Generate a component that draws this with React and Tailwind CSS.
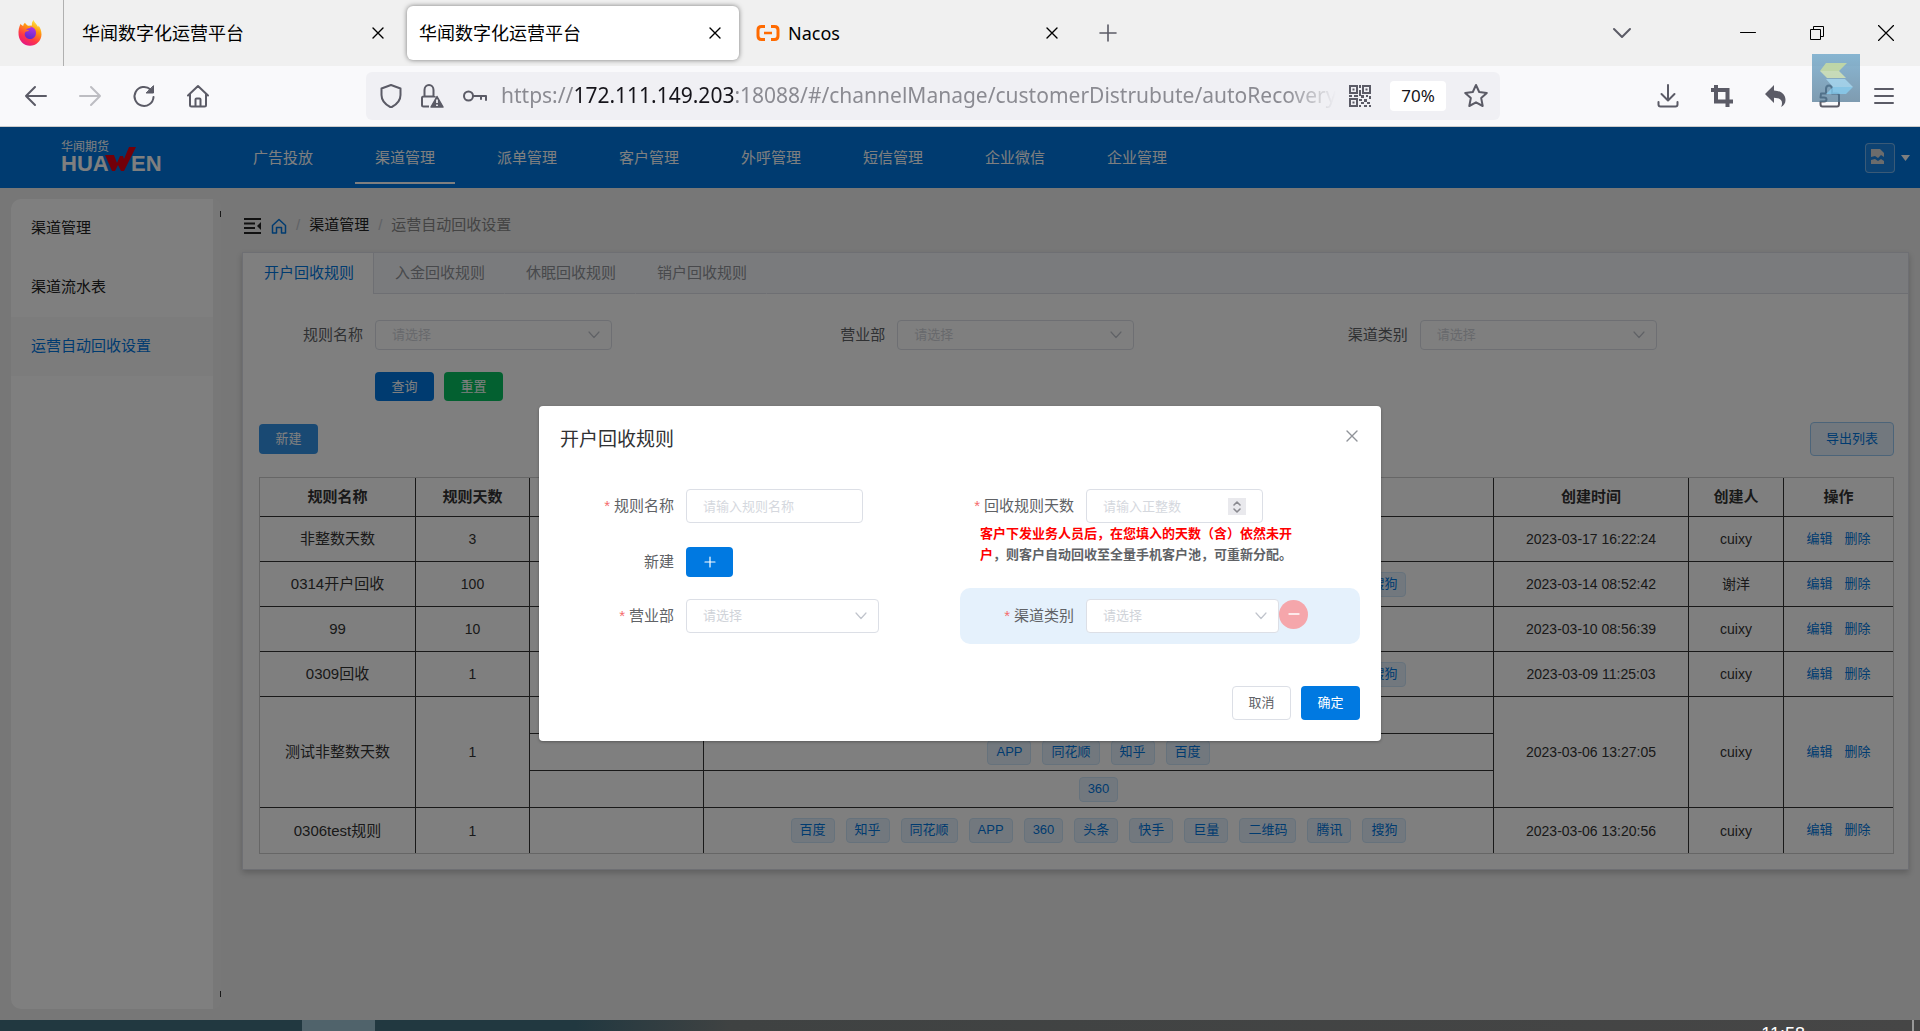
import { useState } from 'react'

const navItems = ['广告投放', '渠道管理', '派单管理', '客户管理', '外呼管理', '短信管理', '企业微信', '企业管理']
const sideItems = ['渠道管理', '渠道流水表', '运营自动回收设置']
const ruleTabs = ['开户回收规则', '入金回收规则', '休眠回收规则', '销户回收规则']
const allChannels = ['百度', '知乎', '同花顺', 'APP', '360', '头条', '快手', '巨量', '二维码', '腾讯', '搜狗']

const rules = [
  { name: '非整数天数', days: 3, groups: [[]], createdAt: '2023-03-17 16:22:24', creator: 'cuixy' },
  { name: '0314开户回收', days: 100, groups: [allChannels], createdAt: '2023-03-14 08:52:42', creator: '谢洋' },
  { name: '99', days: 10, groups: [[]], createdAt: '2023-03-10 08:56:39', creator: 'cuixy' },
  { name: '0309回收', days: 1, groups: [allChannels], createdAt: '2023-03-09 11:25:03', creator: 'cuixy' },
  {
    name: '测试非整数天数',
    days: 1,
    groups: [[], ['APP', '同花顺', '知乎', '百度'], ['360']],
    createdAt: '2023-03-06 13:27:05',
    creator: 'cuixy'
  },
  { name: '0306test规则', days: 1, groups: [allChannels], createdAt: '2023-03-06 13:20:56', creator: 'cuixy' }
]

function Icon({ children, className = 'w-6 h-6', viewBox = '0 0 24 24', strokeWidth = 2 }) {
  return (
    <svg
      className={className}
      viewBox={viewBox}
      fill="none"
      stroke="currentColor"
      strokeWidth={strokeWidth}
      strokeLinecap="round"
      strokeLinejoin="round"
      aria-hidden="true"
    >
      {children}
    </svg>
  )
}

function FirefoxLogo() {
  return (
    <svg className="w-6 h-7" viewBox="0 0 24 28" aria-hidden="true">
      <defs>
        <linearGradient id="fxBody" x1="0.8" y1="0" x2="0.3" y2="1">
          <stop offset="0" stopColor="#fff44f" />
          <stop offset="0.35" stopColor="#ff980e" />
          <stop offset="0.7" stopColor="#ff3647" />
          <stop offset="1" stopColor="#e31587" />
        </linearGradient>
        <linearGradient id="fxGlobe" x1="0.6" y1="0" x2="0.3" y2="1">
          <stop offset="0" stopColor="#b833e1" />
          <stop offset="1" stopColor="#592acb" />
        </linearGradient>
      </defs>
      <path
        d="M15.5 1c-1.500 2-2 3.500-1.500 5.500l-4 .2C8.500 5.800 7.600 5 7 3.800 5.800 4.800 5.300 6 5.200 7 4 6.700 3 5.800 2.600 4.800 1 8 .2 11.500.6 16 1.200 22 6 26.800 12 26.800S23.400 22 23.500 15.500c0-4-1.300-7-3-9l-.3 1.700C19 5 16.500 4 15.500 1z"
        fill="url(#fxBody)"
      />
      <path
        d="M8 10.500c1.500-1 2.500-1.500 5-1.500-1-1-1.500-1-2.200-1.200 3.700-.6 7.400 1.800 7.200 6.200-.2 4-3 6-6 6s-5.300-2.200-5.300-5c0-1.200.5-2 1.500-2.500l2.800-.5c0-1-1.500-1-3-1.500z"
        fill="url(#fxGlobe)"
      />
    </svg>
  )
}

function NacosLogo() {
  return (
    <svg className="w-6 h-5" viewBox="0 0 24 20" fill="none" stroke="#ff6a00" aria-hidden="true">
      <path d="M9 3.500H5.500Q2 3.500 2 7v6q0 3.500 3.500 3.500H9M15 3.500h3.500Q22 3.500 22 7v6q0 3.500-3.500 3.500H15" strokeWidth="3" />
      <path d="M8 10h8" strokeWidth="2.500" />
    </svg>
  )
}

function CloseIcon() {
  return (
    <Icon className="w-3 h-3" viewBox="0 0 12 12" strokeWidth={1.4}>
      <path d="M1 1l10 10M11 1L1 11" />
    </Icon>
  )
}

function BrowserTab({ title, active, icon }) {
  return (
    <div
      className={`flex items-center w-[332px] h-[54px] pl-3 pr-2 rounded-md text-lg text-black ${
        active ? 'bg-white shadow-[0_0_5px_rgba(0,0,0,0.5)]' : ''
      }`}
    >
      {icon && <span className="mr-2">{icon}</span>}
      <span className="flex-1">{title}</span>
      <button aria-label="关闭标签页" className="flex items-center justify-center w-8 h-8">
        <CloseIcon />
      </button>
    </div>
  )
}

function TabStrip() {
  return (
    <div className="flex items-center h-[66px] bg-[#f0f0f0] font-['Noto_Sans','Noto_Sans_CJK_SC',sans-serif]">
      <div className="flex items-center justify-center w-16 h-full pr-1 border-r border-[#b0b0b0]">
        <FirefoxLogo />
      </div>
      <div className="flex flex-1 items-center gap-[5px] pl-[6px]">
        <BrowserTab title="华闻数字化运营平台" />
        <BrowserTab title="华闻数字化运营平台" active />
        <BrowserTab title="Nacos" icon={<NacosLogo />} />
        <button aria-label="新标签页" className="flex justify-center w-[54px] text-[#5b5b66]">
          <Icon className="w-[18px] h-[18px]" viewBox="0 0 18 18" strokeWidth={1.6}>
            <path d="M9 1v16M1 9h16" />
          </Icon>
        </button>
      </div>
      <button aria-label="列出标签页" className="flex justify-center w-[54px] mr-16 text-[#5b5b66]">
        <Icon className="w-5 h-3" viewBox="0 0 20 12">
          <path d="M2 2l8 8 8-8" />
        </Icon>
      </button>
      <button aria-label="最小化" className="flex justify-center w-[69px]">
        <Icon className="w-4 h-4" viewBox="0 0 16 16" strokeWidth={1}>
          <path d="M.5 7.500h15" />
        </Icon>
      </button>
      <button aria-label="还原" className="flex justify-center w-[69px]">
        <svg className="w-4 h-4" viewBox="0 0 16 16" fill="none" stroke="#000" aria-hidden="true">
          <path d="M1.500 4.500h10v10h-10zM4.500 4.500v-3h10v10h-3" />
        </svg>
      </button>
      <button aria-label="关闭" className="flex justify-center w-[69px]">
        <Icon className="w-4 h-4" viewBox="0 0 16 16" strokeWidth={1.2}>
          <path d="M.5.5l15 15M15.500.5l-15 15" />
        </Icon>
      </button>
    </div>
  )
}

function ToolButton({ label, children, className = 'text-[#5b5b66]' }) {
  return (
    <button aria-label={label} className={`flex items-center justify-center w-[54px] h-12 ${className}`}>
      {children}
    </button>
  )
}

function AddressBar() {
  return (
    <div className="flex flex-1 items-center h-12 pl-[5px] mx-[141px] rounded-md bg-[#f0f0f4] text-[#5b5b66]">
      <button aria-label="跟踪保护" className="flex justify-center w-10">
        <Icon>
          <path d="M12 1l9.500 3.500V11c0 5-3.500 9.500-9.500 12.500C6 20.500 2.500 16 2.500 11V4.500z" />
        </Icon>
      </button>
      <button aria-label="连接不安全" className="flex justify-center w-[42px]">
        <svg className="w-6 h-6" viewBox="0 0 24 24" fill="none" stroke="currentColor" strokeWidth="2" aria-hidden="true">
          <path d="M9 22.500H3.500q-1.500 0-1.500-1.500v-7q0-1.500 1.500-1.500h10q1.500 0 1.500 1M4.500 12V6a4.500 5 0 0 1 9 0v6" />
          <path d="M17 12.500L23 23H11z" fill="currentColor" strokeWidth="1.500" strokeLinejoin="round" />
          <path d="M17 15.500v3.500M17 20.500v1.500" stroke="#f0f0f4" strokeWidth="1.800" />
        </svg>
      </button>
      <button aria-label="已保存的登录信息" className="flex justify-center w-[44px]">
        <Icon>
          <circle cx="5.500" cy="12" r="4.500" />
          <path d="M10 12h13v4M18 12v3" />
        </Icon>
      </button>
      <div className="flex-1 w-0 ml-1 overflow-hidden whitespace-nowrap text-[21px] text-[#8b8b92] font-['Noto_Sans',sans-serif] [mask-image:linear-gradient(to_right,black_94%,transparent)]">
        https://<span className="text-[#15141a]">172.111.149.203</span>
        :18088/#/channelManage/customerDistrubute/autoRecovery
      </div>
      <button aria-label="二维码" className="flex justify-center w-12">
        <svg className="w-[22px] h-[22px]" viewBox="0 0 22 22" fill="currentColor" aria-hidden="true">
          <path
            fillRule="evenodd"
            d="M0 0h9v9H0zM2 2v5h5V2zM13 0h9v9h-9zM15 2v5h5V2zM0 13h9v9H0zM2 15v5h5v-5z"
          />
          <path d="M3.500 3.500h2v2h-2zM16.500 3.500h2v2h-2zM3.500 16.500h2v2h-2zM10 0h2v3h-2zM10 5h2v6h-2zM0 10h3v2H0zM5 10h4v2H5zM12 10h3v3h-3zM17 10h2v2h-2zM20 11h2v3h-2zM10 14h3v2h-3zM15 14h3v3h-3zM12 17h3v2h-3zM18 17h3v2h-3zM10 20h2v2h-2zM15 20h3v2h-3zM20 20h2v2h-2z" />
        </svg>
      </button>
      <button className="w-14 h-[30px] mx-[6px] rounded bg-white text-[17px] text-[#15141a] font-['Noto_Sans',sans-serif]">
        70%
      </button>
      <button aria-label="添加书签" className="flex justify-center w-12">
        <Icon viewBox="0 0 26 26" className="w-[26px] h-[26px]">
          <path d="M13 2l3.200 7 7.600.9-5.600 5.200 1.500 7.900-6.700-3.700L6.300 23l1.500-7.900-5.600-5.200 7.600-.9z" />
        </Icon>
      </button>
    </div>
  )
}

function ToolBar() {
  return (
    <div className="flex items-center h-[61px] px-[9px] border-b border-[#ccc] bg-[#f9f9fb]">
      <ToolButton label="后退">
        <Icon>
          <path d="M22 12H2M11 3l-9 9 9 9" />
        </Icon>
      </ToolButton>
      <ToolButton label="前进" className="text-[#bdbdc2]">
        <Icon>
          <path d="M2 12h20M13 3l9 9-9 9" />
        </Icon>
      </ToolButton>
      <ToolButton label="刷新">
        <Icon>
          <path d="M21.500 13a9.500 9.500 0 1 1-3-7.500" />
          <path d="M21.500 2v7h-7z" fill="currentColor" strokeWidth="1" />
        </Icon>
      </ToolButton>
      <ToolButton label="主页">
        <Icon>
          <path d="M2 11.500L12 2l10 9.500M4 10v11q0 1.500 1.500 1.500h13q1.500 0 1.500-1.500V10M9.500 22v-6.500q0-1 1-1h3q1 0 1 1V22" />
        </Icon>
      </ToolButton>
      <AddressBar />
      <ToolButton label="下载">
        <Icon>
          <path d="M12 1v15M5.500 10l6.500 6.500 6.500-6.500M2.500 18v2.500q0 2 2 2h15q2 0 2-2V18" />
        </Icon>
      </ToolButton>
      <ToolButton label="截图">
        <svg className="w-6 h-6" viewBox="0 0 24 24" fill="none" stroke="currentColor" strokeWidth="4" aria-hidden="true">
          <path d="M6 1v16.500h17M1 6h16.500v17" />
        </svg>
      </ToolButton>
      <ToolButton label="撤销">
        <svg className="w-6 h-6" viewBox="0 0 24 24" fill="currentColor" aria-hidden="true">
          <path d="M10 1v5.500c7 .2 11.500 4 11.500 9.500 0 3-1.500 5.500-4.500 7 .8-1.500 1-2.500 1-4 0-3.500-3-5-8-5.200V19L1 10z" />
        </svg>
      </ToolButton>
      <ToolButton label="扩展">
        <Icon>
          <path d="M3 9.500h5V5q0-3.500 3-3.500t3 3.500v4.500h5q2 0 2 2V20q0 2.500-2 2.500H4.500Q2.500 22.500 2.500 20v-2.500H6q2.500 0 2.500-2t-2.500-2H2.500z" />
        </Icon>
      </ToolButton>
      <ToolButton label="菜单">
        <Icon className="w-5 h-5" viewBox="0 0 20 20">
          <path d="M1 3h18M1 10h18M1 17h18" />
        </Icon>
      </ToolButton>
    </div>
  )
}

// translucent screenshot helper that floats over the browser toolbar
function FloatingWidget() {
  return (
    <div className="absolute top-[54px] right-[60px] w-12 h-12 bg-linear-to-b from-[#5a9cc4]/70 to-[#4a7390]/70 pointer-events-none">
      <svg viewBox="0 0 48 48" className="w-12 h-12 opacity-70" aria-hidden="true">
        <path d="M14 9h21l-8 8H8z" fill="#d6e69a" />
        <path d="M8 17h19l7 7H15z" fill="#e4efb4" />
        <path d="M14 25h19l8 8H21z" fill="#aee0f8" />
        <path d="M21 33h20l-7 7H14z" fill="#8ad4f8" />
      </svg>
    </div>
  )
}

function AppHeader() {
  return (
    <header className="flex items-center h-[61px] pl-[61px] pr-[10px] bg-[#0077e1] text-white">
      <svg className="w-[102px] h-8 mr-[70px] overflow-visible" viewBox="0 0 102 32" aria-label="华闻期货 HUAWEN">
        <text x="0" y="9" fontSize="12" fill="#fff">华闻期货</text>
        <text x="0" y="29" fontSize="22" fontWeight="700" fill="#fff">HUA</text>
        <text x="70" y="29" fontSize="22" fontWeight="700" fill="#fff">EN</text>
        <path d="M44 13h9l3 8 3-7h3l1 3L68 5h7L63 29h-3l-3-6-3 6h-3z" fill="#e60012" />
      </svg>
      <nav className="flex flex-1 gap-[22px] h-full">
        {navItems.map((item, index) => (
          <a
            key={item}
            href="#"
            className={`flex items-center h-[57px] px-5 pt-2 text-[15px] border-b-2 ${
              index === 1 ? 'border-white' : 'border-transparent'
            }`}
          >
            {item}
          </a>
        ))}
      </nav>
      <button aria-label="用户菜单" className="flex items-center gap-[6px]">
        <span className="flex items-center justify-center w-[30px] h-[30px] pr-1 pb-1 rounded border border-white/40 bg-white/10">
          <svg className="w-[14px] h-4" viewBox="0 0 14 16" aria-hidden="true">
            <path d="M0 1h9l4 4v4l-3-2-3 3-3-2-4 1zM0 12l4-1 3 2 3-2 3 2v3H0z" fill="#d8d8d8" />
          </svg>
        </span>
        <svg className="w-[9px] h-[6px]" viewBox="0 0 9 6" aria-hidden="true">
          <path d="M0 0h9L4.500 6z" fill="#fff" />
        </svg>
      </button>
    </header>
  )
}

function Sidebar() {
  return (
    <aside className="flex w-[210px]">
      <div className="flex-1 rounded-l-[10px] bg-white overflow-hidden">
        {sideItems.map((item, index) => (
          <a
            key={item}
            href="#"
            className={`flex items-center h-[59px] px-5 text-[15px] ${
              index === 2 ? 'bg-[#f8f8f8] text-[#0077e1]' : 'text-[#222]'
            }`}
          >
            {item}
          </a>
        ))}
      </div>
      <div className="flex flex-col items-end justify-between w-2 py-3 rounded-r-[10px] bg-[#f1f1f1]">
        <span className="w-px h-[6px] bg-[#333]" />
        <span className="w-px h-[6px] bg-[#333]" />
      </div>
    </aside>
  )
}

function Breadcrumb() {
  return (
    <div className="flex items-center h-[53px] px-[2px] text-[15px]">
      <button aria-label="收起菜单" className="text-[#222]">
        <svg className="w-[18px] h-4" viewBox="0 0 18 16" aria-hidden="true">
          <path d="M0 0h17v2H0zM0 4.500h11v2H0zM0 9h11v2H0zM0 14h17v2H0zM17 4v8l-4-4z" fill="currentColor" />
        </svg>
      </button>
      <a href="#" aria-label="首页" className="ml-[9px] text-[#0077e1]">
        <Icon className="w-4 h-4" viewBox="0 0 16 16" strokeWidth={1.5}>
          <path d="M1.500 15V7.500L8 1.500l6.500 6V15h-4V9.500h-5V15z" />
        </Icon>
      </a>
      <span className="mx-[9px] text-[#c0c4cc]">/</span>
      <a href="#" className="text-[#222]">渠道管理</a>
      <span className="mx-[9px] text-[#c0c4cc]">/</span>
      <span className="text-[#888]">运营自动回收设置</span>
    </div>
  )
}

function Select({ id, className }) {
  return (
    <div className={`relative ${className}`}>
      <select
        id={id}
        className="w-full h-full pl-4 rounded border border-[#dcdfe6] bg-white text-[13px] text-[#d0d3d9] appearance-none"
      >
        <option>请选择</option>
      </select>
      <span className="absolute inset-y-0 right-3 flex items-center text-[#c0c4cc] pointer-events-none">
        <Icon className="w-3 h-2" viewBox="0 0 12 8" strokeWidth={1.2}>
          <path d="M1 1l5 5.500L11 1" />
        </Icon>
      </span>
    </div>
  )
}

function FilterField({ id, label }) {
  return (
    <div className="flex items-center">
      <label htmlFor={id} className="w-[116px] pr-3 text-right text-[15px] text-[#606266]">
        {label}
      </label>
      <Select id={id} className="w-[237px] h-[30px]" />
    </div>
  )
}

function Tag({ children }) {
  return (
    <span className="h-[25px] px-2 rounded border border-[#cce4f9] bg-[#e5f1fc] text-[13px] leading-[22px] text-[#0077e1]">
      {children}
    </span>
  )
}

function RuleRows({ rule, isLast }) {
  const span = rule.groups.length
  const line = isLast ? 'border-[#333]' : 'border-b border-[#333]'
  const rowHeight = span > 1 ? 'h-[37px]' : 'h-[45px]'
  return rule.groups.map((tags, index) => (
    <tr key={index} className={rowHeight}>
      {index === 0 && (
        <>
          <td rowSpan={span} className={`border-r text-[15px] ${line}`}>{rule.name}</td>
          <td rowSpan={span} className={`border-r ${line}`}>{rule.days}</td>
        </>
      )}
      <td className={`border-r ${line}`} />
      <td className={`border-r ${line}`}>
        <div className="flex justify-center gap-[11px]">
          {tags.map(tag => (
            <Tag key={tag}>{tag}</Tag>
          ))}
        </div>
      </td>
      {index === 0 && (
        <>
          <td rowSpan={span} className={`border-r ${line}`}>{rule.createdAt}</td>
          <td rowSpan={span} className={`border-r ${line}`}>{rule.creator}</td>
          <td rowSpan={span} className={line}>
            <div className="flex justify-center gap-3 text-[13px] text-[#0077e1]">
              <button>编辑</button>
              <button>删除</button>
            </div>
          </td>
        </>
      )}
    </tr>
  ))
}

function RuleTable() {
  return (
    <table className="w-full table-fixed border-separate border-spacing-0 border border-[#ccc] text-center text-sm text-[#333]">
      <colgroup>
        <col className="w-[156px]" />
        <col className="w-[114px]" />
        <col className="w-[174px]" />
        <col />
        <col className="w-[195px]" />
        <col className="w-[95px]" />
        <col className="w-[109px]" />
      </colgroup>
      <thead>
        <tr className="h-[39px] text-[15px]">
          <th className="border-r border-b border-[#333]">规则名称</th>
          <th className="border-r border-b border-[#333]">规则天数</th>
          <th className="border-r border-b border-[#333]" />
          <th className="border-r border-b border-[#333]" />
          <th className="border-r border-b border-[#333]">创建时间</th>
          <th className="border-r border-b border-[#333]">创建人</th>
          <th className="border-b border-[#333]">操作</th>
        </tr>
      </thead>
      <tbody>
        {rules.map((rule, index) => (
          <RuleRows key={rule.name} rule={rule} isLast={index === rules.length - 1} />
        ))}
      </tbody>
    </table>
  )
}

function RulePanel() {
  return (
    <section className="border border-[#dcdfe6] bg-white shadow-[0_3px_6px_rgba(0,0,0,0.2)]">
      <div className="flex h-[41px] bg-[#f5f7fa]">
        {ruleTabs.map((tab, index) => (
          <button
            key={tab}
            className={`pl-[21px] pr-[19px] border-r text-[15px] ${
              index === 0
                ? 'border-[#dcdfe6] bg-white text-[#0077e1]'
                : 'border-b border-r-transparent border-b-[#dcdfe6] text-[#909399]'
            }`}
          >
            {tab}
          </button>
        ))}
        <div className="flex-1 border-b border-[#dcdfe6]" />
      </div>
      <div className="pl-4 pr-[14px] pt-[26px] pb-[15px]">
        <div className="grid grid-cols-3 pr-[68px]">
          <FilterField id="filterName" label="规则名称" />
          <FilterField id="filterDept" label="营业部" />
          <FilterField id="filterChannel" label="渠道类别" />
        </div>
        <div className="flex gap-[10px] pl-[116px] mt-[22px] text-[13px] text-white">
          <button className="w-[59px] h-[29px] rounded-sm bg-[#0077e1]">查询</button>
          <button className="w-[59px] h-[29px] rounded-sm bg-[#07c160]">重置</button>
        </div>
        <div className="flex items-center justify-between mt-[21px] mb-[21px] text-[13px]">
          <button className="w-[59px] h-[30px] rounded-sm bg-[#3392e7] text-white">新建</button>
          <button className="w-[84px] h-[34px] rounded-sm border border-[#99c9f3] bg-[#e5f1fc] text-[#0077e1]">
            导出列表
          </button>
        </div>
        <RuleTable />
      </div>
    </section>
  )
}

function FormLabel({ htmlFor, required, children }) {
  return (
    <label htmlFor={htmlFor} className="w-[126px] pr-3 text-right text-[15px] text-[#606266]">
      {required && <span className="mr-1 text-[#f56c6c]">*</span>}
      {children}
    </label>
  )
}

function RuleDialog() {
  const [name, setName] = useState('')
  const [days, setDays] = useState('')

  return (
    <div className="absolute inset-0 flex items-center justify-center bg-black/50">
      <div
        role="dialog"
        aria-label="开户回收规则"
        className="w-[842px] p-[21px] rounded-sm bg-white shadow-[0_1px_3px_rgba(0,0,0,0.3)]"
      >
        <div className="flex items-center justify-between h-[26px] mb-9 text-[#303133]">
          <h2 className="text-[19px]">开户回收规则</h2>
          <button aria-label="关闭" className="px-[2px] pb-2 text-[#909399]">
            <CloseIcon />
          </button>
        </div>

        <div className="grid grid-cols-2">
          <div>
            <div className="flex items-center">
              <FormLabel htmlFor="ruleName" required>规则名称</FormLabel>
              <input
                id="ruleName"
                value={name}
                onChange={(e) => setName(e.target.value)}
                placeholder="请输入规则名称"
                className="w-[177px] h-[34px] px-4 rounded border border-[#dcdfe6] text-[13px] placeholder:text-[#d5d8de]"
              />
            </div>
            <div className="flex items-center mt-6 mb-[11px]">
              <FormLabel htmlFor="addChannel">新建</FormLabel>
              <button
                id="addChannel"
                className="flex items-center justify-center w-[47px] h-[30px] rounded-sm bg-[#0079e1] text-white"
              >
                <Icon className="w-3 h-3" viewBox="0 0 12 12" strokeWidth={1.2}>
                  <path d="M6 1v10M1 6h10" />
                </Icon>
              </button>
            </div>
          </div>
          <div>
            <div className="flex items-center">
              <FormLabel htmlFor="ruleDays" required>回收规则天数</FormLabel>
              <div className="relative">
                <input
                  id="ruleDays"
                  type="number"
                  value={days}
                  onChange={(e) => setDays(e.target.value)}
                  placeholder="请输入正整数"
                  className="w-[177px] h-[34px] px-4 rounded border border-[#dcdfe6] text-[13px] placeholder:text-[#d5d8de] [appearance:textfield]"
                />
                <span className="absolute top-[9px] right-[17px] flex items-center justify-center w-[18px] h-[17px] bg-[#e9e9ed] text-[#8a8a90] pointer-events-none">
                  <Icon className="w-2 h-3" viewBox="0 0 8 12" strokeWidth={1.6}>
                    <path d="M1 4l3-3 3 3M1 8l3 3 3-3" />
                  </Icon>
                </span>
              </div>
            </div>
            <p className="w-[313px] ml-5 text-[13px] leading-[21px] font-bold text-[#606266]">
              <span className="text-[#f00]">客户下发业务人员后，在您填入的天数（含）依然未开户</span>
              ，则客户自动回收至全量手机客户池，可重新分配。
            </p>
          </div>
          <div className="flex items-center h-14">
            <FormLabel htmlFor="ruleDept" required>营业部</FormLabel>
            <Select id="ruleDept" className="w-[193px] h-[34px]" />
          </div>
          <div className="flex items-center h-14 rounded-[10px] bg-[#e5f1fc]">
            <FormLabel htmlFor="ruleChannel" required>渠道类别</FormLabel>
            <Select id="ruleChannel" className="w-[193px] h-[34px]" />
            <button
              aria-label="移除渠道类别"
              className="flex items-center justify-center w-[29px] h-[29px] mb-1 rounded-full bg-[#f5a6ab] text-white"
            >
              <Icon className="w-3 h-3" viewBox="0 0 12 12" strokeWidth={1.4}>
                <path d="M1 6h10" />
              </Icon>
            </button>
          </div>
        </div>

        <div className="flex justify-end gap-[10px] mt-[42px] text-[13px]">
          <button className="w-[59px] h-[34px] rounded-sm border border-[#dcdfe6] text-[#606266]">取消</button>
          <button className="w-[59px] h-[34px] rounded-sm bg-[#0079e1] text-white">确定</button>
        </div>
      </div>
    </div>
  )
}

function TaskBar() {
  return (
    <div className="flex h-[11px] overflow-hidden bg-linear-to-r from-[#213840] from-30% via-[#3f4242] via-38% to-[#464646]">
      <div className="w-[73px] h-full ml-[302px] bg-[#50636b]" />
      <div className="flex flex-1 justify-end pt-[6px] pr-[107px] text-lg leading-4 text-white">11:58</div>
      <div className="w-[2px] mr-[6px] bg-[#999]" />
    </div>
  )
}

export default function App() {
  return (
    <div className="relative flex flex-col h-screen overflow-hidden font-['Liberation_Sans','Noto_Sans_CJK_SC',sans-serif]">
      <TabStrip />
      <ToolBar />
      <FloatingWidget />
      <div className="relative flex flex-1 flex-col min-h-0 bg-[#eee]">
        <AppHeader />
        <div className="flex flex-1 gap-[21px] pt-[11px] px-[11px] pb-[11px]">
          <Sidebar />
          <main className="flex-1">
            <Breadcrumb />
            <RulePanel />
          </main>
        </div>
        <RuleDialog />
      </div>
      <TaskBar />
    </div>
  )
}
